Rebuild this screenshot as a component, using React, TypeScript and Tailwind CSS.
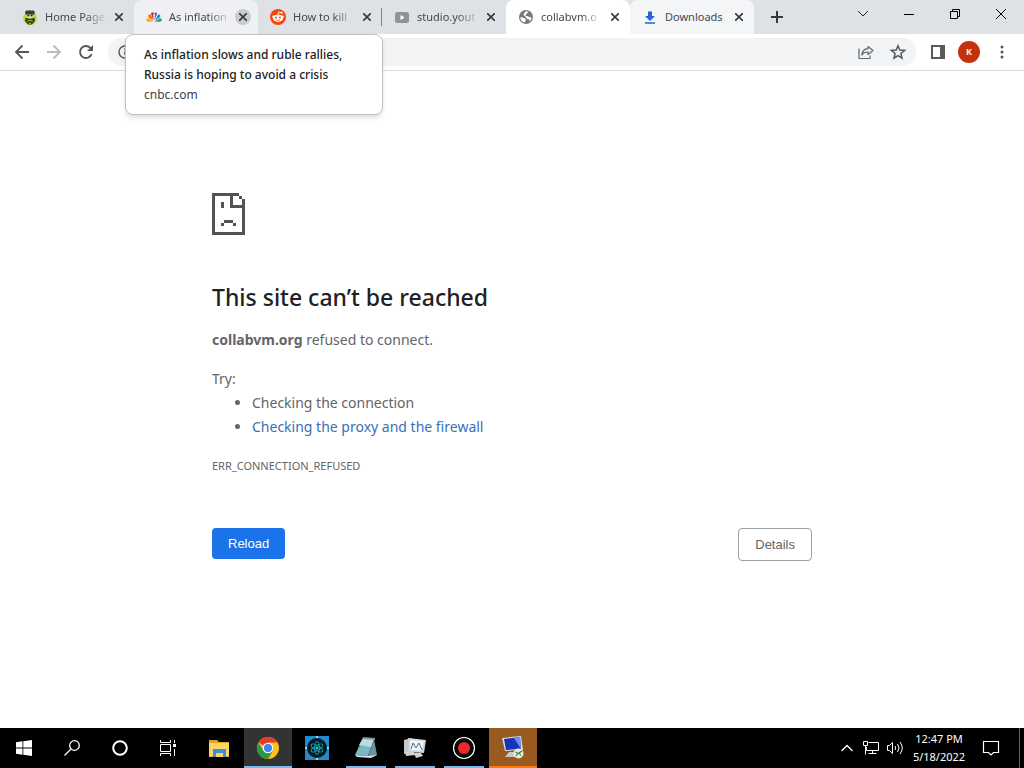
import { ReactNode } from 'react';
import clsx from 'clsx';

type TabInfo = {
  title: string;
  icon: ReactNode;
  look?: 'active' | 'hover' | 'light';
  divider?: boolean;
};

const HomeIcon = () => (
  <svg viewBox="0 0 16 16" className="size-4 shrink-0">
    <circle cx="8" cy="9" r="7" fill="#c5d82e" />
    <path d="M3 3 5 1l1 1 2-1 2 1 1-1 2 2-1 3H4z" fill="#3a3c34" />
    <path d="M4.500 5.500h7l-1 3.500h-5z" fill="#deddc4" />
    <path d="M3.500 8.500c2 1.500 7 1.500 9 0l.5 3.500-3 3.500H6L3 12z" fill="#3b431e" />
    <circle cx="6.400" cy="6.500" r="1" fill="#222" />
    <circle cx="9.600" cy="6.500" r="1" fill="#222" />
    <path d="M5.500 12.500c1.500-1.500 3.500-1.500 5 0M7 14.500h2" stroke="#a9c02e" fill="none" />
  </svg>
);

const PeacockIcon = () => (
  <svg viewBox="0 0 16 16" className="size-4 shrink-0">
    <path d="M7.300 12.800H2a1.900 1.900 0 0 1-.6-3.600C2.400 8.800 3 9.300 7.300 12.800z" fill="#f5b51b" />
    <path d="M7.300 12 2.600 8.200C1.400 6.900 2.500 5.200 4 5.500c1 .2 1.500 1.200 3.300 6.500z" fill="#ee6a24" />
    <path d="M7.600 11.300 5.200 5.400C4.800 4 6 3.100 7.200 3.400l1 .8-.9 1.200z" fill="#d92a45" />
    <path d="M8.300 11.300 9 5.800 8.400 4c1-1.200 3-.5 2.700 1z" fill="#7158b4" />
    <path d="m8.700 12 3-5.800c.8-1.200 3-.7 2.600 1.200-.2.600-.4.800-5.600 4.600z" fill="#2787d2" />
    <path d="m8.700 12.800 5-3.600c1.700-.4 2.700 1.600 1.700 2.800-.4.500-.8.800-1.400.8z" fill="#27a45a" />
  </svg>
);

const RedditIcon = () => (
  <svg viewBox="0 0 16 16" className="size-4 shrink-0">
    <circle cx="8" cy="8" r="8" fill="#ff4500" />
    <path d="m8 6 .8-3 2.600.6" stroke="#fff" strokeWidth=".9" fill="none" />
    <circle cx="11.700" cy="3.700" r="1" fill="#fff" />
    <circle cx="3.500" cy="7.700" r="1.300" fill="#fff" />
    <circle cx="12.500" cy="7.700" r="1.300" fill="#fff" />
    <ellipse cx="8" cy="9.200" rx="5" ry="3.700" fill="#fff" />
    <circle cx="6" cy="8.500" r="1" fill="#ff4500" />
    <circle cx="10" cy="8.500" r="1" fill="#ff4500" />
    <path d="M6 10.800c1 .8 3 .8 4 0" stroke="#ff4500" strokeWidth=".8" fill="none" />
  </svg>
);

const VideoIcon = () => (
  <svg viewBox="0 0 16 16" className="size-4 shrink-0">
    <rect x="1" y="3" width="14" height="11" rx="2.500" fill="#909294" />
    <path d="M6.500 6v5l4-2.500z" fill="#fff" />
  </svg>
);

const GlobeIcon = () => (
  <svg viewBox="0 0 16 16" className="size-4 shrink-0">
    <circle cx="8" cy="8" r="7" fill="#77797d" />
    <path d="M2.300 8.300c1.400-.2 3 0 3.700.8.700.8 2 .6 1.900 1.800-.1 1-1 1-1 2.700C4 13.300 2.300 11 2.300 8.300zM7.300 2.400c1.500-.3 2.200-.2 3.200.4-.4 1-1.400.9-1.500 1.800 0 .9-1.500.8-1.700 1.600-.1.700 2.700.6 3.500 1.500.8.900 2.400.3 2.800.9-.2 1.800-.9 3-1.900 3.800-.5-1.200-.4-2.200-1.500-2.400-1.300-.2-1.800-.6-2.200-1.600C7.500 7 5.500 7 5.500 5.600c0-1.500 1.900-1.700 1.800-3.200z" fill="#fff" />
  </svg>
);

const DownloadIcon = () => (
  <svg viewBox="0 0 16 16" className="size-4 shrink-0" fill="#2962d9">
    <path d="M6 2.500h4V7h3L8 12 3 7h3zM3 13.300h10v1.400H3z" />
  </svg>
);

const tabs: TabInfo[] = [
  { title: 'Home Page', icon: <HomeIcon /> },
  { title: 'As inflation', icon: <PeacockIcon />, look: 'hover' },
  { title: 'How to kill', icon: <RedditIcon />, divider: true },
  { title: 'studio.yout', icon: <VideoIcon /> },
  { title: 'collabvm.o', icon: <GlobeIcon />, look: 'active' },
  { title: 'Downloads', icon: <DownloadIcon />, look: 'light' },
];

function Tab({ title, icon, look, divider }: TabInfo) {
  return (
    <div
      className={clsx(
        'flex h-full w-[124px] items-center rounded-t-lg pr-[7px] pl-3',
        look === 'active' && 'bg-white',
        look === 'hover' && 'bg-[#eef0f3]',
        look === 'light' && 'bg-[#f3f5f7]',
        divider && 'bg-[linear-gradient(#808388,#808388)] bg-[length:1px_18px] bg-[position:right_center] bg-no-repeat'
      )}
    >
      {icon}
      <span
        className={clsx(
          'ml-[7px] w-[62px] text-[11px] whitespace-nowrap text-[#45484c]',
          title !== 'Downloads' && '[mask-image:linear-gradient(to_right,#000_65%,transparent)]'
        )}
      >
        {title}
      </span>
      <button
        aria-label={`Close ${title}`}
        className={clsx('ml-1 flex size-4 shrink-0 items-center justify-center rounded-full', look === 'hover' && 'bg-[#c9cbcf]')}
      >
        <svg viewBox="0 0 8 8" className="size-2" stroke="#35383c" strokeWidth="1.600">
          <path d="m0 0 8 8M8 0 0 8" />
        </svg>
      </button>
    </div>
  );
}

function TabStrip() {
  return (
    <header className="flex h-[34px] bg-[#dee1e6] pl-[10px]">
      {tabs.map((tab) => (
        <Tab key={tab.title} {...tab} />
      ))}
      <button aria-label="New tab" className="ml-[17px] flex items-center">
        <svg viewBox="0 0 12 12" className="size-3" stroke="#35383c" strokeWidth="2">
          <path d="M6 0v12M0 6h12" />
        </svg>
      </button>
      <div className="ml-auto flex h-7 items-center">
        <button aria-label="Search tabs" className="flex w-[46px] justify-center">
          <svg viewBox="0 0 12 12" className="size-3" fill="none" stroke="#222">
            <path d="m1 3 5 5 5-5" />
          </svg>
        </button>
        <button aria-label="Minimize" className="flex w-[46px] justify-center">
          <svg viewBox="0 0 10 10" className="size-[10px]" stroke="#000">
            <path d="M0 5.500h10" />
          </svg>
        </button>
        <button aria-label="Restore" className="flex w-[46px] justify-center">
          <svg viewBox="0 0 10 10" className="size-[10px]" fill="none" stroke="#000">
            <path d="M.5 2.500h7v7h-7zM2.500 2.500v-2h7v7h-2" />
          </svg>
        </button>
        <button aria-label="Close window" className="flex w-[46px] justify-center">
          <svg viewBox="0 0 10 10" className="size-[10px]" stroke="#000">
            <path d="m0 0 10 10M10 0 0 10" />
          </svg>
        </button>
      </div>
    </header>
  );
}

function Toolbar() {
  return (
    <nav className="flex h-[37px] items-center border-b border-[#d9dbde] bg-white pr-[14px] pl-[14px]">
      <button aria-label="Back">
        <svg viewBox="0 0 16 16" className="size-4" fill="none" stroke="#54575b" strokeWidth="1.800">
          <path d="M15 8H2M8.500 1.500 2 8l6.500 6.500" />
        </svg>
      </button>
      <button aria-label="Forward" className="ml-4">
        <svg viewBox="0 0 16 16" className="size-4" fill="none" stroke="#b9bbbe" strokeWidth="1.800">
          <path d="M1 8h13M7.500 1.500 14 8l-6.500 6.500" />
        </svg>
      </button>
      <button aria-label="Reload page" className="ml-4">
        <svg viewBox="0 0 16 16" className="size-4" fill="none" stroke="#54575b" strokeWidth="1.900">
          <path d="M13.600 10.200A6 6 0 1 1 12.300 3.800L14 5.500" />
          <path d="M15 1v6H9z" fill="#54575b" stroke="none" />
        </svg>
      </button>
      <div className="ml-[14px] flex h-7 flex-1 items-center rounded-full bg-[#f1f3f4] pr-[10px] pl-[10px]">
        <svg viewBox="0 0 14 14" className="size-[14px]" fill="none" stroke="#54575b" strokeWidth="1.400">
          <circle cx="7" cy="7" r="6" />
          <path d="M7 6v4M7 3.500V5" />
        </svg>
        <input aria-label="Address" className="min-w-0 flex-1 bg-transparent px-2 text-[13px] outline-none" />
        <button aria-label="Share">
          <svg viewBox="0 0 16 16" className="size-4" fill="none" stroke="#64676b" strokeWidth="1.200">
            <path d="M1 4.500v10h11v-3" />
            <path d="M10 2.500 15 6.500l-5 4V8c-3-.1-4.700.6-6.200 3 .3-3.500 2.400-6 6.200-6.300z" strokeLinejoin="round" />
          </svg>
        </button>
        <button aria-label="Bookmark" className="ml-4">
          <svg viewBox="0 0 16 16" className="size-4" fill="none" stroke="#54575b" strokeWidth="1.500">
            <path d="m8 1.800 1.800 4.300 4.700.4-3.600 3 1.100 4.600L8 11.600l-4 2.500 1.100-4.600-3.600-3 4.700-.4z" />
          </svg>
        </button>
      </div>
      <button aria-label="Side panel" className="ml-[14px]">
        <svg viewBox="0 0 16 16" className="size-4" fill="#5b5a5a">
          <path d="M1 1h14v14H1zm2 2v10h7V3z" fillRule="evenodd" />
        </svg>
      </button>
      <button className="ml-3 flex size-[22px] items-center justify-center rounded-full bg-[#c5310c] text-[9px] font-bold text-[#fff3e0]">K</button>
      <button aria-label="Menu" className="ml-[14px]">
        <svg viewBox="0 0 16 16" className="size-4" fill="#54575b">
          <circle cx="8" cy="3" r="1.500" />
          <circle cx="8" cy="8" r="1.500" />
          <circle cx="8" cy="13" r="1.500" />
        </svg>
      </button>
    </nav>
  );
}

function ErrorPage() {
  return (
    <main className="flex-1 bg-white">
      <div className="mx-auto w-full max-w-[600px] pt-[122px] text-[14px] leading-6 text-[#646568]">
        <svg viewBox="0 0 11 14" className="h-[42px] w-[33px]" fill="#535353" shapeRendering="crispEdges">
          <path d="M0 0h9v1H7v3h3V2h1v12H0zm1 1v12h9V5H6V1z" fillRule="evenodd" />
          <path d="M9 1h1v1H9zM3 3h1v2H3zM4 9h3v1H4zM3 10h1v1H3zM7 10h1v1H7z" />
        </svg>
        <h1 className="mt-[47px] text-[23px] leading-[30px] font-medium text-[#202124]">This site can’t be reached</h1>
        <p className="mt-4">
          <strong>collabvm.org</strong> refused to connect.
        </p>
        <p className="mt-[15px]">Try:</p>
        <ul className="list-disc pl-10">
          <li>Checking the connection</li>
          <li>
            <a href="#proxy" className="text-[#3871b8]">Checking the proxy and the firewall</a>
          </li>
        </ul>
        <p className="mt-[15px] text-[11px] leading-6">ERR_CONNECTION_REFUSED</p>
        <div className="mt-[50px] flex items-start justify-between font-['Liberation_Sans',Arial,sans-serif] text-[13px] leading-[15px]">
          <button className="rounded bg-[#1a73e8] px-4 py-2 text-white">Reload</button>
          <button className="rounded border border-[#9aa0a6] px-4 py-2 text-[#5f6368]">Details</button>
        </div>
      </div>
    </main>
  );
}

const apps = [
  {
    name: 'File Explorer',
    style: '',
    icon: (
      <svg viewBox="0 0 24 24" className="size-6">
        <path d="M2 4h8l2 2h10v3H2z" fill="#dfa32c" />
        <path d="M2 7h20v14H2z" fill="#fcd462" />
        <path d="M6 13h13v8h-3v-4h-7v4H6z" fill="#3b91d5" />
        <path d="M2 20h4v1H2zM19 20h3v1h-3z" fill="#e0ad3f" />
      </svg>
    ),
  },
  {
    name: 'Chrome',
    style: 'bg-[#333] border-b-2 border-[#76b9ed]',
    icon: (
      <svg viewBox="0 0 24 24" className="mt-[2px] size-6">
        <circle cx="12" cy="12" r="11" fill="#fbc116" />
        <path d="M12 12 2.500 6.500A11 11 0 0 1 21.500 6.500H12z" fill="#e33b2e" />
        <path d="M2.500 6.500A11 11 0 0 0 12 23l4.800-8.300L12 12 7.200 14.700z" fill="#279847" />
        <circle cx="12" cy="12" r="5.300" fill="#fff" />
        <circle cx="12" cy="12" r="4.200" fill="#4285f4" />
      </svg>
    ),
  },
  {
    name: 'Atom',
    style: '',
    icon: (
      <svg viewBox="0 0 24 24" className="size-6" fill="none">
        <path d="M0 0h24v24H0z" fill="#238bcb" />
        <path d="M12 0v24M0 12h24" stroke="#c5eaff" strokeWidth="1.500" />
        <circle cx="12" cy="12" r="10" fill="#071820" />
        <g stroke="#139eaa">
          <ellipse cx="12" cy="12" rx="2.500" ry="6.500" />
          <ellipse cx="12" cy="12" rx="2.500" ry="6.500" transform="rotate(60 12 12)" />
          <ellipse cx="12" cy="12" rx="2.500" ry="6.500" transform="rotate(120 12 12)" />
        </g>
        <circle cx="12" cy="12" r="1.500" fill="#27c6ce" />
      </svg>
    ),
  },
  {
    name: 'Notepad',
    style: 'open',
    icon: (
      <svg viewBox="0 0 24 24" className="mt-[2px] size-6">
        <path d="m9 2 11 1-6 17-13-1z" fill="#7cb6c0" />
        <path d="m9 2 11 1-3 8-12-2z" fill="#b8dce0" />
        <path d="m20 3 3 16-6 2-3-1z" fill="#6a949c" />
        <path d="m1 19 13 1 9-1-6 3-14-1z" fill="#dce3e3" />
        <path d="m9 1 12 1v2L9 3z" fill="#8b9698" />
      </svg>
    ),
  },
  {
    name: 'Task Monitor',
    style: 'open',
    icon: (
      <svg viewBox="0 0 24 24" className="mt-[2px] size-6">
        <path d="m1 4 8-2v15l-8 1z" fill="#c3c9cc" />
        <path d="m5 2 18 2-2 13-16-1z" fill="#cdd2d4" />
        <path d="m7 4 14 1-2 10-12-1z" fill="#edf5fa" />
        <path d="m8 13 2-6 3 5 3-5 3 7" fill="none" stroke="#3f6e9d" />
        <path d="M2 16h9l1 3-9 1zM11 17h7l2 3-7 2z" fill="#d2d4d3" />
      </svg>
    ),
  },
  {
    name: 'Recorder',
    style: 'open',
    icon: (
      <svg viewBox="0 0 24 24" className="mt-[2px] size-6">
        <circle cx="12" cy="12" r="10.500" fill="#080808" stroke="#fff" strokeWidth="1.200" />
        <circle cx="12" cy="12" r="6" fill="#ef292b" />
      </svg>
    ),
  },
  {
    name: 'Remote Desktop',
    style: 'bg-[#995a20] border-b-2 border-[#ff7807]',
    icon: (
      <svg viewBox="0 0 24 24" className="mt-[2px] size-6">
        <path d="m1 2 19-2 2 14-18 1z" fill="#d5dcec" />
        <path d="m3 3 16-2 1 12-15 1z" fill="#1835ba" />
        <path d="m13 2 6-1 1 12z" fill="#6a95ed" />
        <path d="m8 16 6 0 2 5H4z" fill="#c6c9cc" />
        <circle cx="17.500" cy="17.500" r="5" fill="#e9edda" />
        <path d="m14.500 16 2.500 1.500-2 2.500m6-5-3 2 2 2.500" fill="none" stroke="#347e46" strokeWidth="1.200" />
      </svg>
    ),
  },
];

function Taskbar() {
  return (
    <footer className="flex h-10 bg-black text-white">
      <button aria-label="Start" className="flex w-12 items-center justify-center">
        <svg viewBox="0 0 16 16" className="size-4" fill="#fff">
          <path d="m0 2.200 6.500-.9v6.300H0zM7.300 1.200 16 0v7.600H7.300zM0 8.400h6.500v6.300L0 13.800zM7.300 8.400H16V16l-8.700-1.200z" />
        </svg>
      </button>
      <button aria-label="Search" className="flex w-12 items-center justify-center">
        <svg viewBox="0 0 16 16" className="size-4" fill="none" stroke="#fff" strokeWidth="1.300">
          <circle cx="10.500" cy="5.500" r="4.800" />
          <path d="M7 9 .5 15.500" />
        </svg>
      </button>
      <button aria-label="Cortana" className="flex w-12 items-center justify-center">
        <svg viewBox="0 0 16 16" className="size-4" fill="none" stroke="#fff" strokeWidth="2">
          <circle cx="8" cy="8" r="6.800" />
        </svg>
      </button>
      <button aria-label="Task view" className="flex w-12 items-center justify-center">
        <svg viewBox="0 0 16 16" className="size-4" fill="none" stroke="#fff">
          <path d="M.5 0v2.500h10V0M.5 16v-2.500h10V16M.5 4.500h10v7H.5zM14.500 0v3M14.500 9v7" />
          <path d="M13 4h3v3h-3z" fill="#fff" stroke="none" />
        </svg>
      </button>
      <div className="ml-[3px] flex gap-px">
        {apps.map((app) => (
          <button
            key={app.name}
            aria-label={app.name}
            className={clsx('flex items-center justify-center', app.style === 'open' ? 'mx-1 w-10 border-b-2 border-[#76b9ed]' : ['w-12', app.style])}
          >
            {app.icon}
          </button>
        ))}
      </div>
      <div className="ml-auto flex items-center">
        <button aria-label="Show hidden icons">
          <svg viewBox="0 0 12 12" className="size-3" fill="none" stroke="#fff" strokeWidth="1.300">
            <path d="m.5 9 5.500-5.500L11.500 9" />
          </svg>
        </button>
        <button aria-label="Network" className="ml-[10px]">
          <svg viewBox="0 0 16 16" className="size-4" fill="none" stroke="#fff">
            <path d="M5.500 2.500h10v8h-12V7M.5 1.500h4v4h-4zM2.500 5.500v9M9.500 10.500v3M5.500 13.500h8" />
          </svg>
        </button>
        <button aria-label="Volume" className="ml-2">
          <svg viewBox="0 0 16 16" className="size-4" fill="none" stroke="#fff">
            <path d="M.5 5.500h2l3-3v11l-3-3h-2zM8 6q1.500 2 0 4M10.500 4q3 4 0 8M13 2q4.500 6 0 12" />
          </svg>
        </button>
        <div className="ml-[9px] w-[54px] text-center text-[11px] leading-[18px] whitespace-nowrap">
          <div>12:47 PM</div>
          <div>5/18/2022</div>
        </div>
        <button aria-label="Notifications" className="ml-4">
          <svg viewBox="0 0 18 18" className="size-[18px]" fill="none" stroke="#fff" strokeWidth="1.200">
            <path d="M1.500 2.500h15v11h-5L9 16l-2.500-2.500h-5z" />
          </svg>
        </button>
        <button aria-label="Show desktop" className="ml-[19px] h-10 w-[5px] border-l border-[#666]" />
      </div>
    </footer>
  );
}

export default function App() {
  return (
    <div className="relative flex min-h-screen flex-col bg-white font-['Noto_Sans','Open_Sans',sans-serif]">
      <TabStrip />
      <Toolbar />
      <ErrorPage />
      <Taskbar />
      {/* Hover card of the second tab */}
      <div role="tooltip" className="absolute top-[34px] left-[125px] w-[258px] rounded-lg border border-[#bfc1c4] bg-white px-[18px] pt-[10px] pb-[9px] text-[12px] leading-5 text-[#202124] shadow-md">
        <p className="font-medium">
          As inflation slows and ruble rallies,
          <br />
          Russia is hoping to avoid a crisis
        </p>
        <p className="text-[#404246]">cnbc.com</p>
      </div>
    </div>
  );
}
